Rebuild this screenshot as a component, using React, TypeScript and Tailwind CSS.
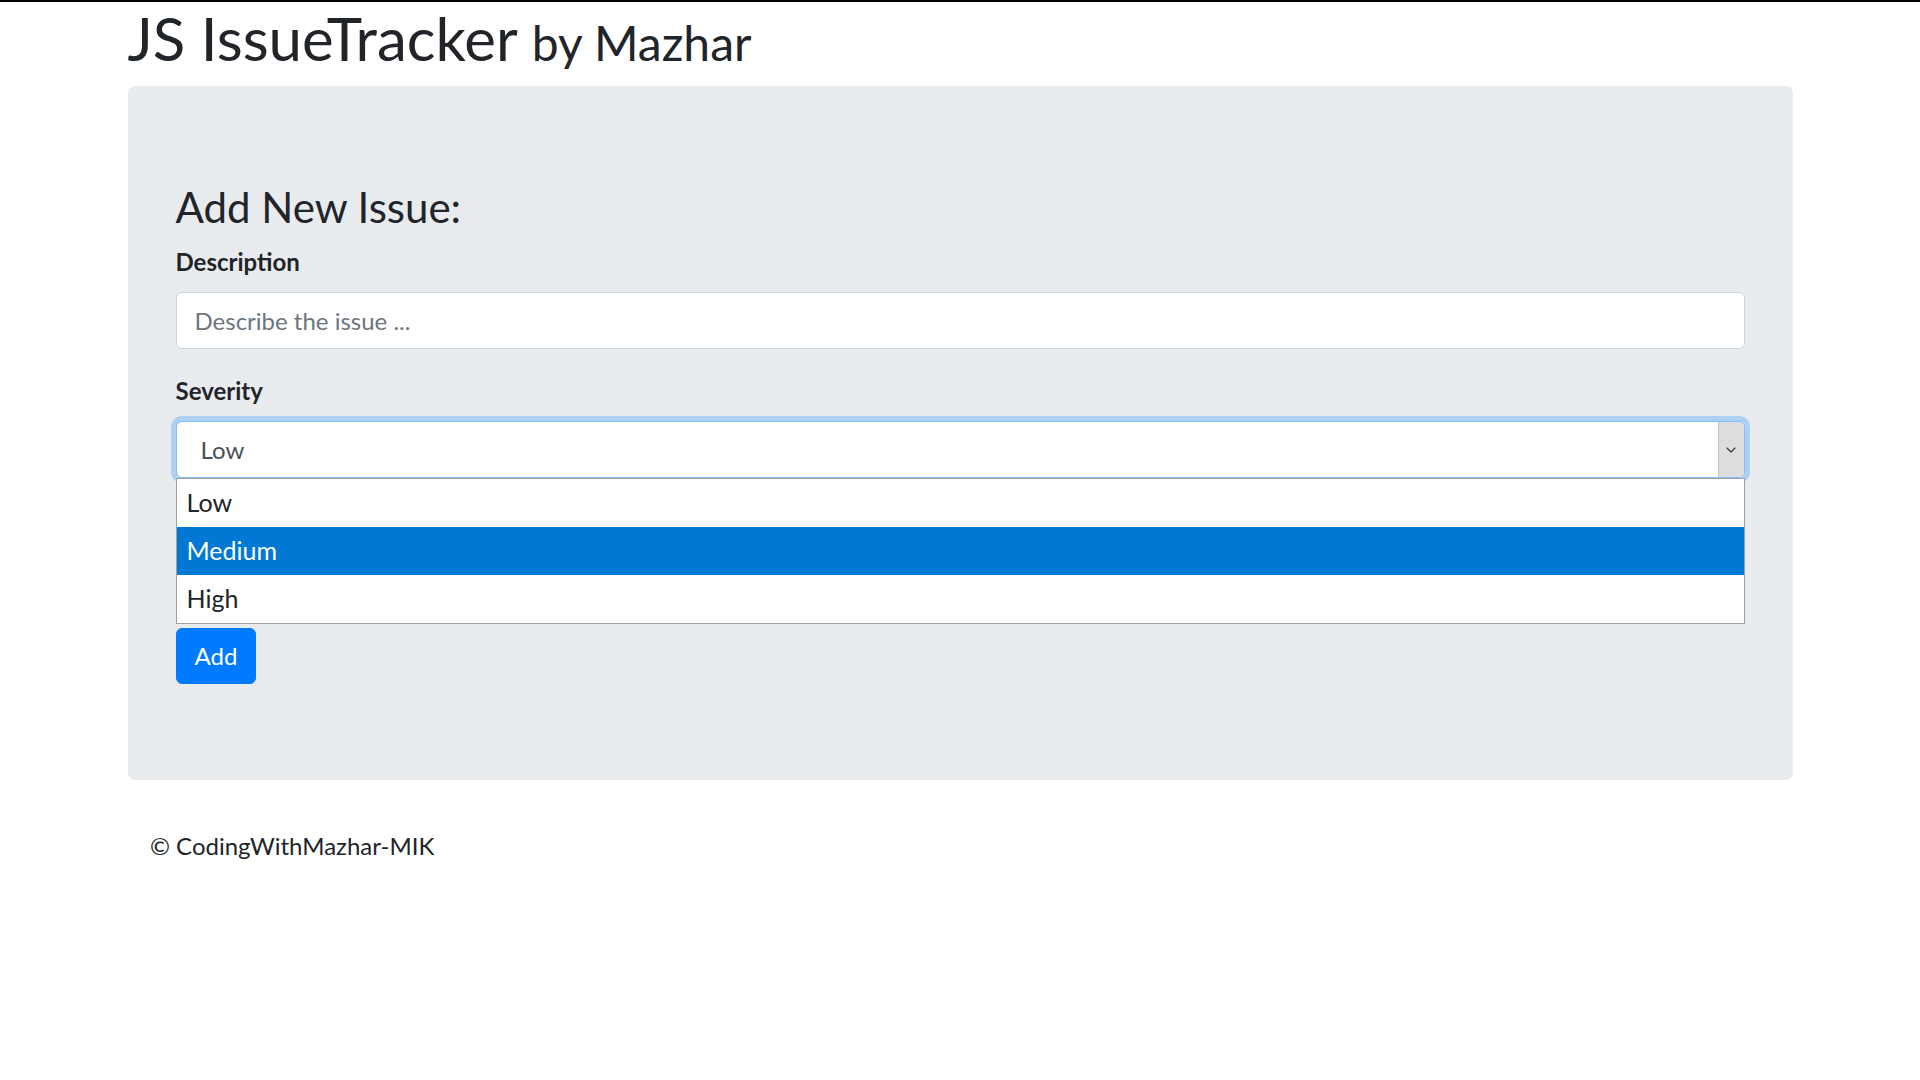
import { ChevronDown } from 'lucide-react'

const FONT = { fontFamily: '"Segoe UI", Lato, "Noto Sans", sans-serif' }

const OPTIONS = ['Low', 'Medium', 'High']

export default function App() {
  return (
    <div className="min-h-screen bg-white text-[#212529]" style={FONT}>
      {/* top edge */}
      <div className="h-[2px] bg-black" />

      <div className="mx-auto w-[1710px] px-[22.5px]">
        {/* Header */}
        <h1 className="h-[72px] text-[60px] leading-[72px] font-normal mb-[12px] overflow-hidden">
          JS IssueTracker <small className="text-[48px] leading-none">by Mazhar</small>
        </h1>

        {/* Jumbotron */}
        <div className="bg-[#e9ecef] rounded-[7px] px-[48px] py-[96px]">
          <h3 className="text-[42px] leading-[50px] font-normal mb-[12px]">Add New Issue:</h3>

          <form onSubmit={e => e.preventDefault()}>
            <div className="mb-[24px]">
              <label className="block text-[24px] leading-[36px] font-bold mb-[12px]">Description</label>
              <input
                type="text"
                placeholder="Describe the issue ..."
                className="block w-full h-[57px] px-[18px] text-[24px] bg-white border border-[#ced4da] rounded-[6px] text-[#495057] placeholder:text-[#6c757d] outline-none"
              />
            </div>

            <div className="mb-[24px] relative">
              <label className="block text-[24px] leading-[36px] font-bold mb-[12px]">Severity</label>
              <div className="flex h-[57px] bg-white border border-[#80bdff] rounded-[6px] shadow-[0_0_0_5px_rgba(0,123,255,0.25)] overflow-hidden">
                <div className="flex-1 flex items-center pl-[24px] text-[24px] text-[#495057]">Low</div>
                <div className="w-[26px] flex items-center justify-center bg-[#dddddd] border-l border-[#c4c4c4]">
                  <ChevronDown size={16} strokeWidth={1.6} className="text-[#333]" />
                </div>
              </div>

              {/* open native list */}
              <div className="absolute left-0 right-0 top-[105px] z-10 bg-white border border-[#a0a0a0]">
                {OPTIONS.map(o => (
                  <div
                    key={o}
                    className={`h-[48px] flex items-center pl-[10px] text-[25px] ${o === 'Medium' ? 'bg-[#0078d4] text-white' : 'text-[#212529]'}`}
                  >
                    {o}
                  </div>
                ))}
              </div>
            </div>

            {/* sits under the open list */}
            <div className="mb-[21px] invisible" aria-hidden>
              <label className="block text-[24px] leading-[36px] font-bold mb-[12px]">Assigned To</label>
              <input
                type="text"
                tabIndex={-1}
                className="block w-full h-[57px] px-[18px] text-[24px] bg-white border border-[#ced4da] rounded-[6px] outline-none"
              />
            </div>

            <button
              type="submit"
              className="h-[56px] px-[18px] bg-[#007bff] text-white text-[24px] rounded-[6px] border border-[#007bff]"
            >
              Add
            </button>
          </form>
        </div>

        {/* Footer */}
        <footer className="mt-[48px] px-[22.5px]">
          <p className="text-[24px] leading-[36px]">© CodingWithMazhar-MIK</p>
        </footer>
      </div>
    </div>
  )
}
